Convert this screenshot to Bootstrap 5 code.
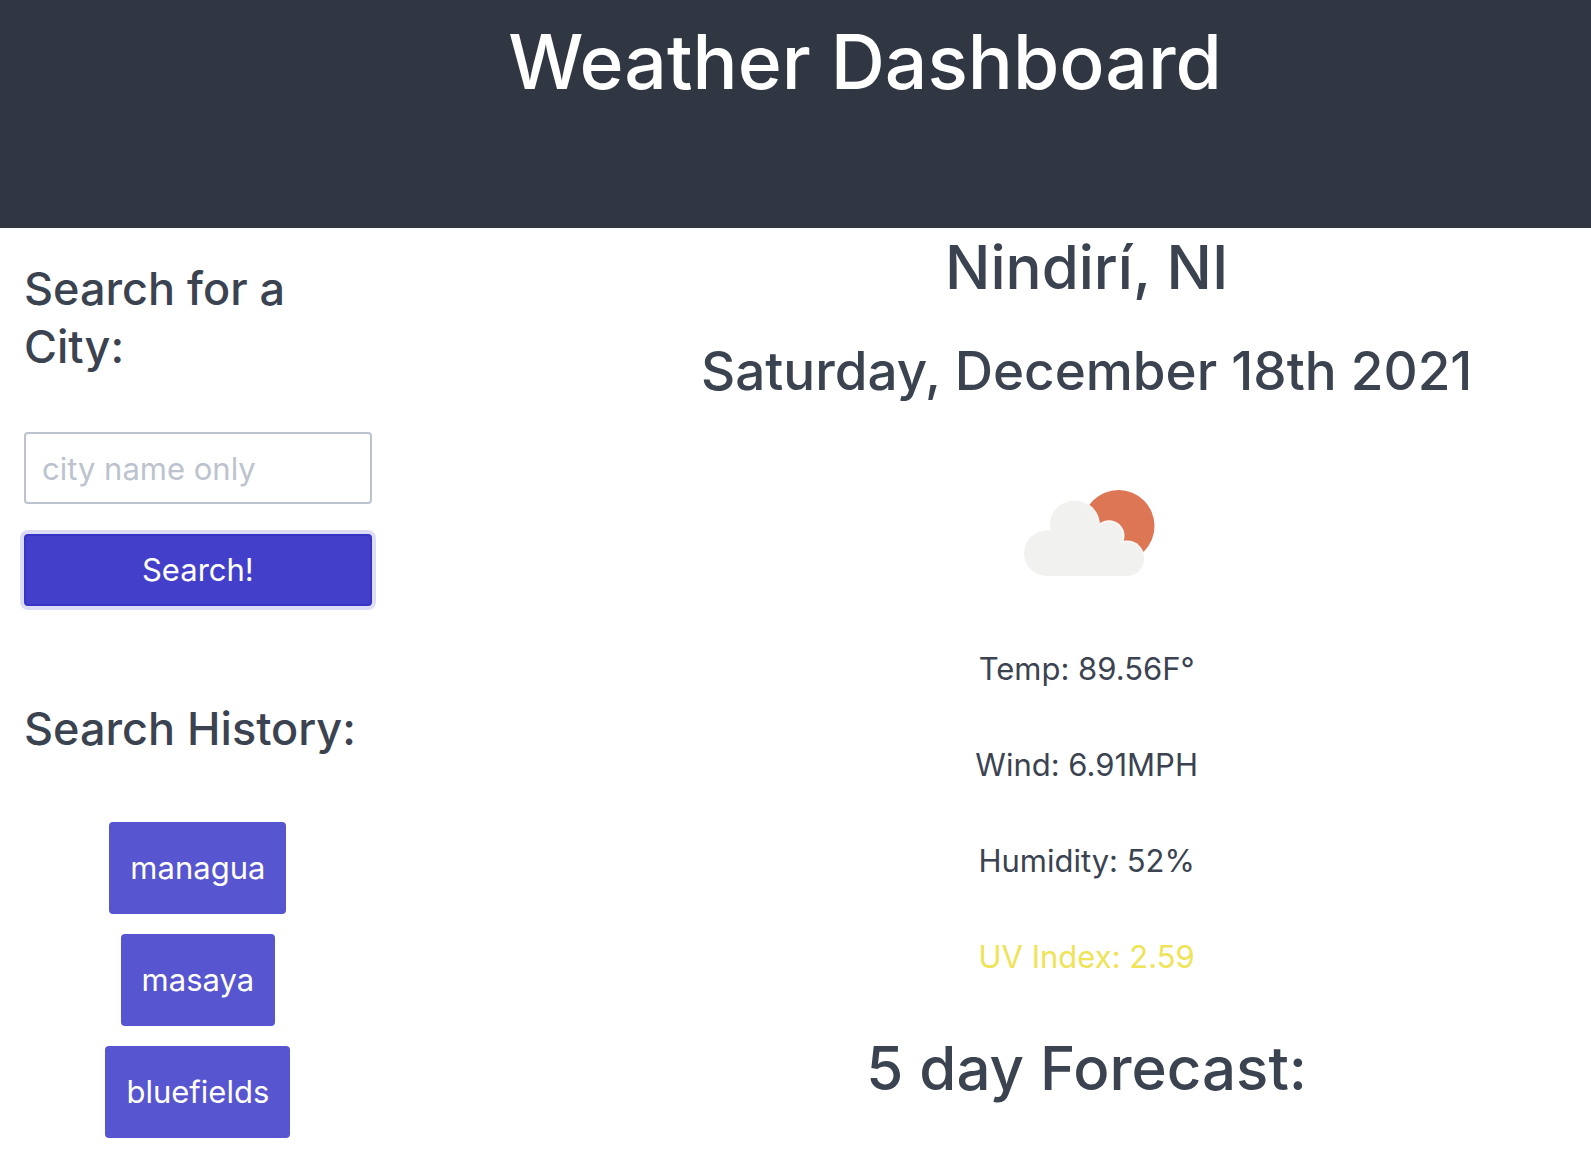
<!DOCTYPE html>
<html lang="en">
<head>
<meta charset="utf-8">
<meta name="viewport" content="width=device-width, initial-scale=1">
<title>Weather Dashboard</title>
<link rel="stylesheet" href="https://cdn.jsdelivr.net/npm/bootstrap@5.3.0/dist/css/bootstrap.min.css">
<style>
  body { font-family: Inter, "Liberation Sans", sans-serif; font-size: 31px; line-height: 48px; color: #3b4351; }
  h1, h2, h3, h4 { font-weight: 500; }
  h1 { font-size: 75px; line-height: 96px; }
  h2 { font-size: 60px; line-height: 78px; }
  h3 { font-size: 53px; line-height: 67px; }
  h4 { font-size: 45px; line-height: 58px; }
  .site-header { background: #313742; padding: 14px 0 118px 139px; }
  .sidebar { padding: 32px 26px 0 24px; }
  .current-weather { width: 63.4%; }
  .city-input, .search-btn { height: 72px; font-size: 31px; line-height: 48px; border-width: 2px; border-radius: 4px; }
  .city-input { border-color: #bcc3ce; padding: 10px 16px; color: #3b4351; }
  .city-input::placeholder { color: #bcc3ce; }
  .search-btn, .search-btn:hover { color: #fff; background: #433fcb; border-color: #3634c5; box-shadow: 0 0 0 4px #dddcf6; }
  .search-form { gap: 30px; margin-top: 56px; }
  .history-title { margin-top: 94px; }
  .history-list { gap: 20px; margin-top: 64px; }
  .history-btn, .history-btn:hover { height: 92px; padding: 0 21px; font-size: 31px; color: #fff; background: #5755d0; border: 0; border-radius: 4px; }
  .weather-icon { width: 200px; height: 200px; margin-top: 28px; }
  .readings { gap: 48px; margin: 12px 0 48px; }
  .uv-moderate { color: #efe357; }
</style>
<script src="https://cdn.jsdelivr.net/npm/bootstrap@5.3.0/dist/js/bootstrap.bundle.min.js"></script>
</head>
<body>
<header class="site-header text-center text-white">
  <h1 class="m-0">Weather Dashboard</h1>
</header>
<div class="container-fluid p-0">
  <div class="row g-0">
    <aside class="col-3 sidebar">
      <h4 class="m-0"><label for="city">Search for a City:</label></h4>
      <form class="search-form d-flex flex-column">
        <input id="city" type="text" class="form-control city-input" placeholder="city name only">
        <button type="button" class="btn search-btn w-100 p-0">Search!</button>
      </form>
      <h4 class="history-title mb-0 text-nowrap">Search History:</h4>
      <div class="history-list d-flex flex-column align-items-center">
        <button type="button" class="btn history-btn">managua</button>
        <button type="button" class="btn history-btn">masaya</button>
        <button type="button" class="btn history-btn">bluefields</button>
      </div>
    </aside>
    <main class="current-weather ms-auto text-center">
      <h2 class="mb-0">Nindirí, NI</h2>
      <h3 class="mt-4 pt-2 mb-0">Saturday, December 18th 2021</h3>
      <svg class="weather-icon d-block mx-auto" viewBox="0 0 200 200" role="img" aria-label="Few clouds">
        <circle cx="131.5" cy="93" r="36" fill="#dc7654"/>
        <g fill="#fdf8f5">
          <circle cx="88" cy="92.3" r="25"/>
          <circle cx="122" cy="102.7" r="15.5"/>
          <circle cx="140" cy="125" r="17.5"/>
        </g>
        <g fill="#f1f1f0">
          <circle cx="59.7" cy="120.3" r="22.7"/>
          <circle cx="87.3" cy="92.3" r="24.5"/>
          <circle cx="121.5" cy="103.2" r="14.2"/>
          <circle cx="140" cy="126" r="17"/>
          <path d="M59.7 143V98H63L87 92l35 10 18 24v17z"/>
        </g>
      </svg>
      <div class="readings d-flex flex-column">
        <p class="m-0">Temp: 89.56F°</p>
        <p class="m-0">Wind: 6.91MPH</p>
        <p class="m-0">Humidity: 52%</p>
        <p class="m-0 uv-moderate">UV Index: 2.59</p>
      </div>
      <h2 class="mb-0">5 day Forecast:</h2>
    </main>
  </div>
</div>
</body>
</html>
